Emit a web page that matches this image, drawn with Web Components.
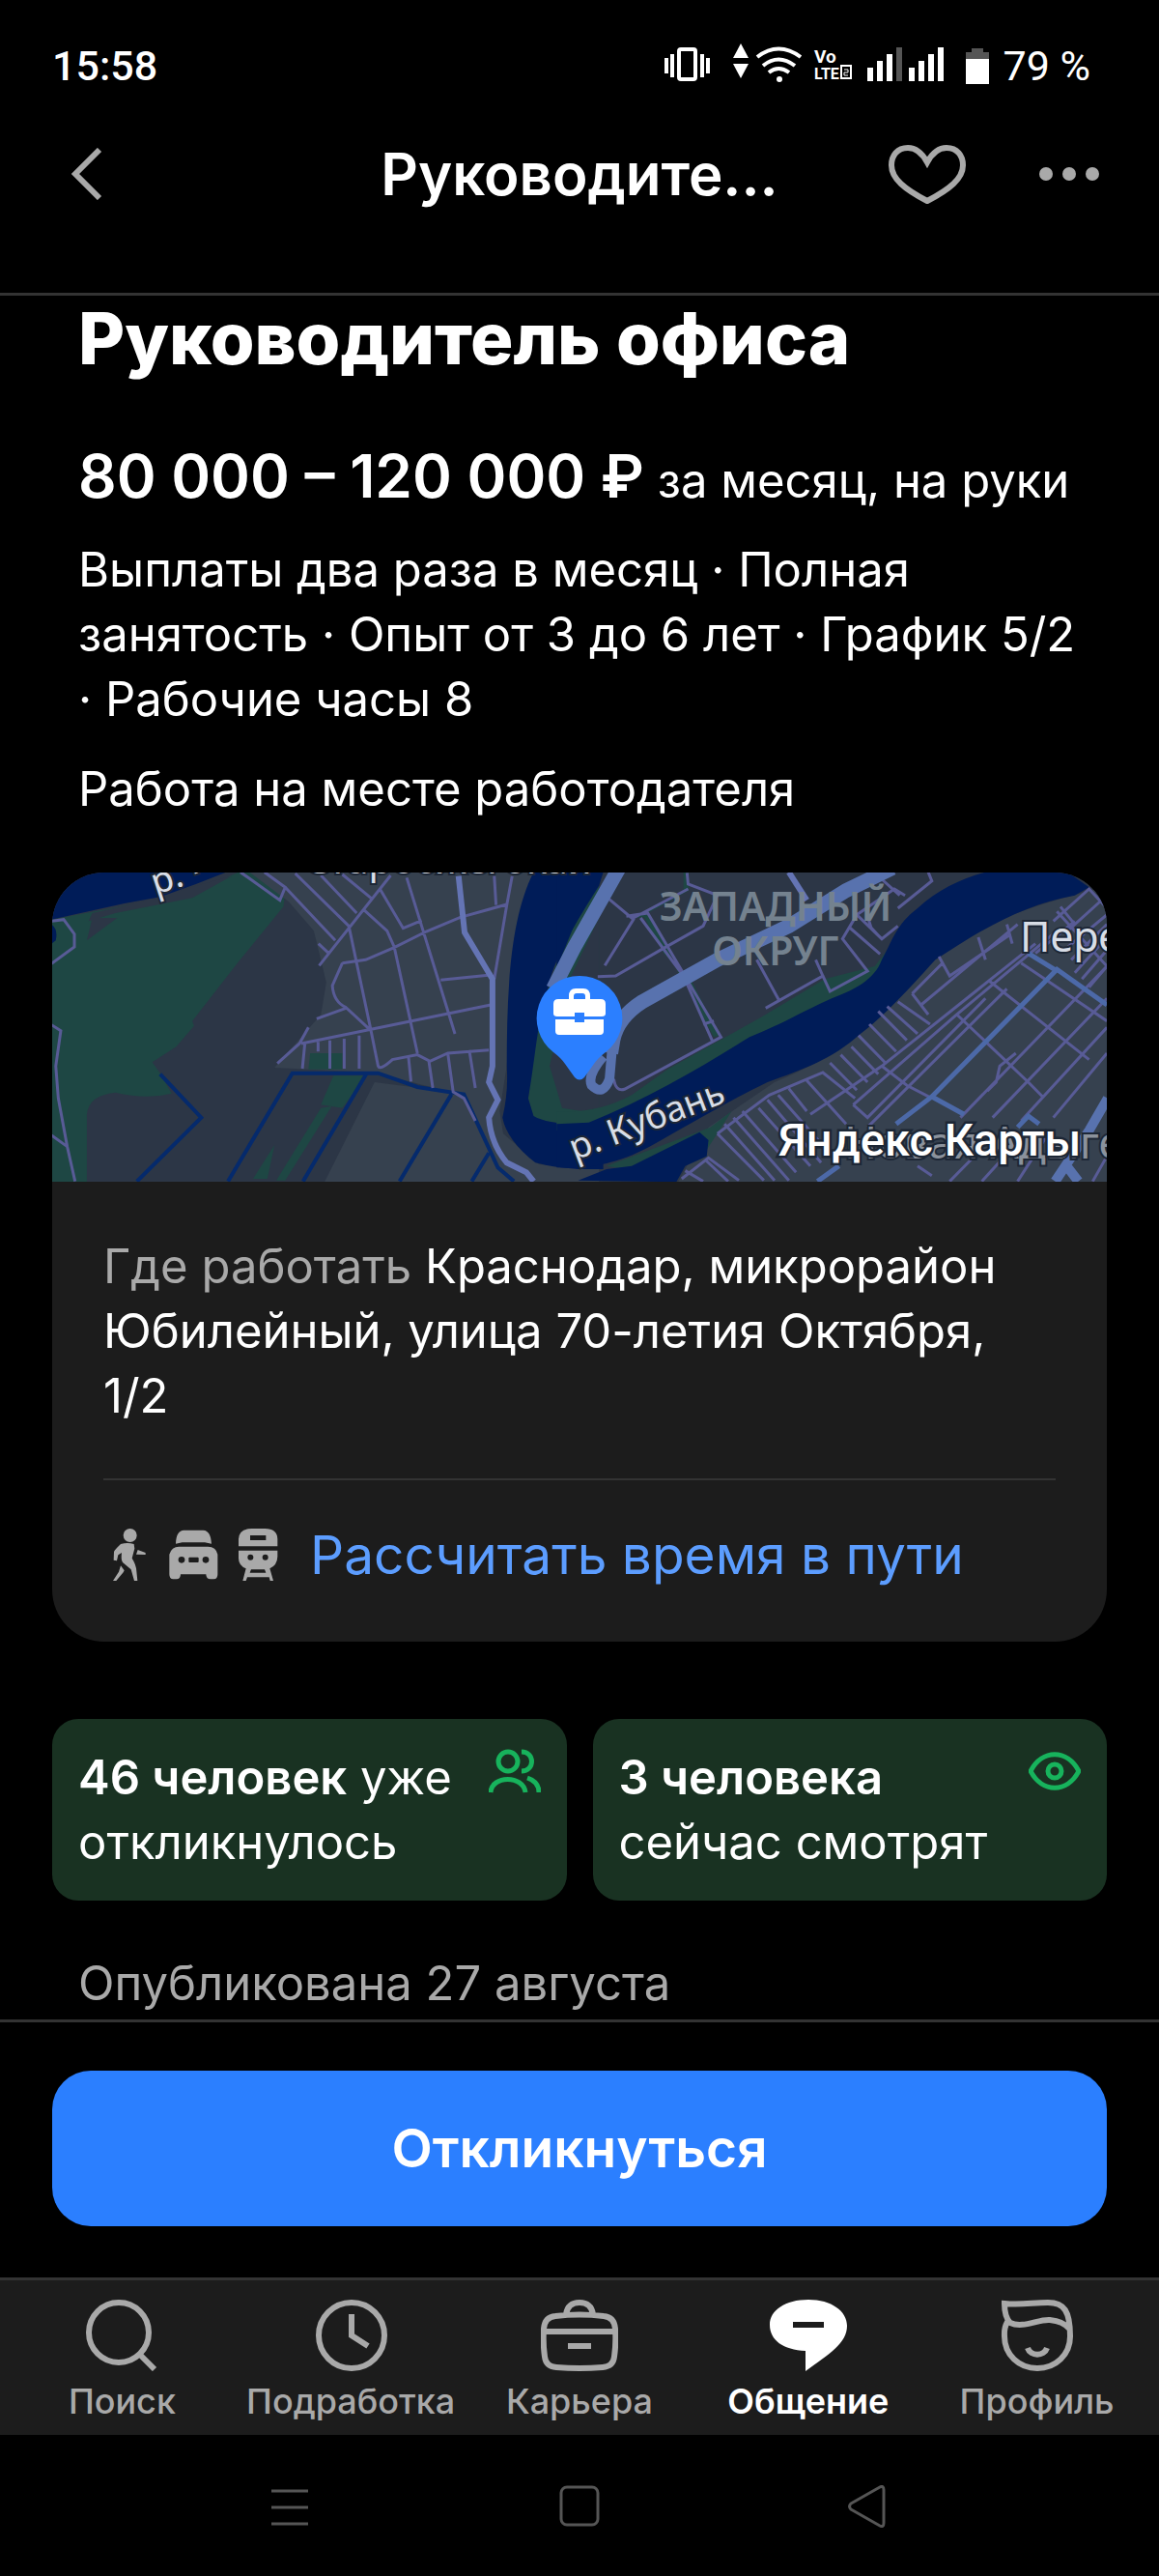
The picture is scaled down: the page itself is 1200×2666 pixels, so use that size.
<!DOCTYPE html>
<html lang="ru">
<head>
<meta charset="utf-8">
<meta name="viewport" content="width=device-width, initial-scale=1">
<title>Руководитель офиса</title>
<style>
  :root {
    --bg: #000;
    --surface: #1c1c1c;
    --line: #333;
    --muted: #a9a9a9;
    --blue: #2b7fff;
    --link: #5c9dff;
    --green: #17b35c;
    --edge: 54px;
    --text: 49px;
    --leading: 67px;
  }

  body {
    margin: 0;
    min-height: 100vh;
    display: flex;
    flex-direction: column;
    background: var(--bg);
    color: #fff;
    font-family: Inter, "Liberation Sans", sans-serif;
    font-size: var(--text);
    line-height: var(--leading);
  }

  main {
    flex: 1;
    padding: 2px var(--edge) 4px;
  }

  .stats {
    display: grid;
    grid-template-columns: 1fr 1fr;
    gap: 27px;
    margin-top: 80px;
  }

  .published {
    margin: 52px 27px 0;
    color: var(--muted);
  }
</style>
</head>
<body>
  <status-bar></status-bar>
  <top-bar>Руководите...</top-bar>

  <main>
    <vacancy-summary>
      <span slot="title">Руководитель офиса</span>
      <span slot="salary">80 000 – 120 000 ₽</span>
      <span slot="period">за месяц, на руки</span>
      <span slot="terms">Выплаты два раза в месяц · Полная занятость · Опыт от 3 до 6 лет · График 5/2 · Рабочие часы 8</span>
      <span slot="place">Работа на месте работодателя</span>
    </vacancy-summary>

    <location-card>
      <span slot="label">Где работать</span>
      Краснодар, микрорайон Юбилейный, улица 70-летия Октября, 1/2
      <span slot="route">Рассчитать время в пути</span>
    </location-card>

    <section class="stats">
      <stat-badge icon="people"><b slot="count">46 человек</b> уже откликнулось</stat-badge>
      <stat-badge icon="eye"><b slot="count">3 человека</b> сейчас смотрят</stat-badge>
    </section>

    <p class="published">Опубликована 27 августа</p>
  </main>

  <apply-bar>Откликнуться</apply-bar>

  <tab-bar>
    <tab-item icon="search">Поиск</tab-item>
    <tab-item icon="clock">Подработка</tab-item>
    <tab-item icon="case">Карьера</tab-item>
    <tab-item icon="chat" active>Общение</tab-item>
    <tab-item icon="profile">Профиль</tab-item>
  </tab-bar>

  <system-nav></system-nav>

<script>
customElements.define(
  "status-bar",
  class extends HTMLElement {
    constructor() {
      super().attachShadow({ mode: "open" });
    }

    connectedCallback() {
      this.shadowRoot.innerHTML = /*html*/ `
        <style>
          :host {
            display: flex;
            align-items: center;
            justify-content: space-between;
            height: 136px;
            padding: 0 71px 0 54px;
            font: 500 43px/50px Roboto, sans-serif;
          }

          .icons {
            display: flex;
            align-items: center;
            gap: 15px;
          }

          svg { display: block; }
          .level { font-weight: 400; }
        </style>

        <time>15:58</time>
        <div class="icons">
          <svg width="297" height="46" viewBox="0 0 297 46" fill="#fff">
            <!-- vibration -->
            <rect x="15" y="6" width="17" height="31" rx="2" fill="none" stroke="#fff" stroke-width="4"/>
            <path d="M0 15h4v16H0zM6 11h4v24H6zM37 11h4v24h-4zM43 15h4v16h-4z"/>
            <!-- traffic arrows -->
            <path d="M79 0l8 15H71zM79 36l8 -15H71z"/>
            <!-- wifi -->
            <g fill="none" stroke="#fff" stroke-width="4">
              <path d="M96 14Q118 -3 141 14M102 23Q118 10 135 23M108 30Q118 22 129 30"/>
            </g>
            <circle cx="119" cy="37" r="3"/>
            <!-- volte -->
            <text x="155" y="20" font-size="19" font-weight="700">Vo</text>
            <text x="155" y="37" font-size="16" font-weight="700">LTE</text>
            <rect x="183" y="23" width="10" height="13" fill="none" stroke="#fff" stroke-width="2"/>
            <path d="M186 27h4v3h-4v3h4" fill="none" stroke="#fff" stroke-width="1"/>
            <!-- signal -->
            <path d="M210 25h6v14h-6zM220 18h6v21h-6zM230 11h6v28h-6z"/>
            <path d="M240 4h6v35h-6z" fill="#555"/>
            <path d="M253 25h6v14h-6zM263 18h6v21h-6zM273 11h6v28h-6zM283 4h6v35h-6z"/>
          </svg>
          <svg width="24" height="37" viewBox="0 0 24 37">
            <path d="M0 11V4H6V0H18V4H24V11z" fill="#555"/>
            <path d="M0 11H24V37H0z" fill="#fff"/>
          </svg>
          <span class="level">79 %</span>
        </div>
      `;
    }
  }
);

customElements.define(
  "top-bar",
  class extends HTMLElement {
    constructor() {
      super().attachShadow({ mode: "open" });
    }

    connectedCallback() {
      this.shadowRoot.innerHTML = /*html*/ `
        <style>
          :host {
            display: grid;
            grid-template-columns: 1fr auto 1fr;
            align-items: center;
            height: 88px;
            padding: 0 62px 79px;
            border-bottom: 3px solid var(--line);
          }

          h2 {
            margin: 0;
            font-size: 60px;
            font-weight: 600;
            line-height: 72px;
          }

          button {
            display: block;
            padding: 0;
            border: 0;
            background: none;
            color: var(--muted);
          }

          .back { padding-left: 11px; }

          .actions {
            display: flex;
            align-items: center;
            justify-content: flex-end;
            gap: 75px;
          }

          svg {
            display: block;
            fill: none;
            stroke: currentColor;
            stroke-width: 6;
          }
        </style>

        <button class="back" aria-label="Назад">
          <svg width="34" height="54" viewBox="0 0 34 54"><path d="M30 2L5 27L30 52"/></svg>
        </button>
        <h2><slot></slot></h2>
        <div class="actions">
          <button aria-label="В избранное">
            <svg width="82" height="62" viewBox="0 0 82 62">
              <path d="M41 19C35 8 29 4 21 4C10 4 4 12 4 22C4 36 18 47 41 59C64 47 78 36 78 22C78 12 72 4 61 4C53 4 47 8 41 19z"/>
            </svg>
          </button>
          <button aria-label="Ещё">
            <svg width="62" height="14" viewBox="0 0 62 14">
              <g fill="currentColor" stroke="none"><circle cx="7" cy="7" r="7"/><circle cx="31" cy="7" r="7"/><circle cx="55" cy="7" r="7"/></g>
            </svg>
          </button>
        </div>
      `;
    }
  }
);

customElements.define(
  "vacancy-summary",
  class extends HTMLElement {
    constructor() {
      super().attachShadow({ mode: "open" });
    }

    connectedCallback() {
      this.shadowRoot.innerHTML = /*html*/ `
        <style>
          :host {
            display: block;
            padding: 0 27px;
          }

          h1 {
            margin: 0;
            font-size: 74px;
            font-weight: 800;
            line-height: 84px;
          }

          p { margin: 26px 0 0; }

          .salary {
            margin-top: 64px;
            font-size: 62px;
            line-height: 74px;
          }

          strong { font-weight: 600; }

          .salary small {
            font-size: var(--text);
            line-height: 50px;
          }
        </style>

        <h1><slot name="title"></slot></h1>
        <p class="salary"><strong><slot name="salary"></slot></strong><small> <slot name="period"></slot></small></p>
        <p><slot name="terms"></slot></p>
        <p><slot name="place"></slot></p>
      `;
    }
  }
);

customElements.define(
  "area-map",
  class extends HTMLElement {
    constructor() {
      super().attachShadow({ mode: "open" });
    }

    connectedCallback() {
      this.shadowRoot.innerHTML = /*html*/ `
        <style>
          :host {
            display: block;
            height: 320px;
            background: #2c3646;
          }

          svg {
            display: block;
            width: 100%;
            height: 100%;
            font-family: "Noto Sans", sans-serif;
          }

          path { vector-effect: non-scaling-stroke; }
          .water { fill: #001c58; }
          .canal { fill: none; stroke: #052a6c; stroke-width: 4; }
          .park { fill: #1e4744; }
          .town { fill: #36414f; }
          .street { fill: none; stroke: #585b96; stroke-width: 3; }
          .road { fill: none; stroke: #6474b4; stroke-width: 6; }
          .highway { fill: none; stroke: #5872ae; stroke-width: 15; }
          .label { fill: #d8dde6; stroke: #1d2736; stroke-width: 4; paint-order: stroke; }
          .district { fill: #74828f; font-weight: 600; text-anchor: middle; }
        </style>

        <svg viewBox="0 0 1092 320" preserveAspectRatio="xMidYMid slice">
          <!-- west bank -->
          <g transform="translate(-14 -13) scale(.37 .3333)">
            <path class="park" d="M36 185L300 130L430 100L560 38H640L692 80L685 145L560 315L430 500L435 515L385 580L318 628L340 662L372 725Q300 745 215 722Q140 730 135 790V1000H36z"/>
            <path fill="#2c3646" d="M140 190L215 165L430 118L540 50L440 80L250 140L150 165zM135 250L220 180L150 180z"/>
            <path class="water" d="M36 38H525L440 75L340 115L240 135L36 185zM36 200Q55 215 48 250L36 260z"/>
            <path class="town" d="M700 130L590 38H1400L1330 300L1310 640L1290 780L1300 850L1400 945L1568 960V1000H800L940 690L1150 720L940 660L660 645L790 480L805 380L770 220z"/>
            <path class="park" d="M760 600H850V650H755zM825 670H915L850 770L790 760zM790 770L820 765L690 995H665zM660 885L640 990H600z"/>
            <path class="canal" d="M340 665L455 800L275 998M530 998L710 662H950L1060 705L1190 728L1285 955L1330 998M918 662L740 998M1155 728L1010 998M1260 910L1212 998"/>
            <path class="street" d="M36 190L70 185L100 230V270L36 322M36 512L62 530L48 640L55 740L80 890L102 998M36 855L80 890"/>
            <path class="street" d="M565 38L675 125L690 85L632 38M690 85L830 250M718 42L868 205M790 48L890 165M850 45L930 118M985 48L785 328M783 260L812 290M868 205L930 530L950 640Q955 655 990 620L1060 605L1095 625L1145 600L1260 590M910 155L975 220L995 270L1060 600M955 90L1020 212L1072 188M1030 55L1165 540M850 320L915 310L995 272L1085 222L1180 178L1310 138M1325 50L1310 140L1275 370M1275 50L1280 140M1125 373L1265 357M850 320L822 390Q825 440 860 458L930 530M778 493L860 460M735 570L1265 450M755 520L730 570L668 632M745 570L738 648M782 565V595M815 560V648M855 555V648M897 545V648M1035 612L1042 688M1092 625L1103 708M1145 600L1160 720L1190 740L1222 810M1205 590L1222 708"/>
            <path class="road" d="M1175 50L1192 225L1270 370V640L1260 690L1285 745L1260 800Q1265 880 1310 940L1365 970L1385 998"/>
            <path class="park" d="M1568 60L1480 230Q1440 330 1395 520L1370 740L1385 800Q1450 830 1568 805V38z"/>
            <path fill="#2c3646" d="M1568 180L1490 360L1430 640L1465 770L1520 780L1568 770z"/>
            <path class="water" d="M1385 38H1580L1568 80C1500 200 1440 310 1425 400C1395 500 1392 600 1370 740L1385 795Q1440 830 1580 815V960H1510Q1440 955 1390 940Q1310 870 1298 800Q1315 720 1310 640C1310 400 1320 180 1385 38z"/>
          </g>

          <!-- east bank -->
          <g transform="translate(526 -13) scale(.37 .3333)">
            <path class="town" d="M1540 80C1350 130 1150 200 1040 310C900 480 800 600 600 690L415 830L330 1000H1540z"/>
            <path class="park" d="M-10 780Q100 790 200 730L300 650L430 570L560 490L740 370L880 330L1000 160L1110 70L1200 38H1260V60L1000 200L880 380L530 600L100 840H-10zM420 830L480 780L410 900L180 960L130 950z"/>
            <path class="park" d="M345 38V95L205 180L235 178L290 290L345 355L410 510L430 550L445 545L370 380L330 350L300 270L245 165L360 95V38z"/>
            <path class="water" d="M-10 38H120L40 200L0 310L-10 400zM-10 820L80 815C250 740 400 640 530 550C640 500 660 480 760 430C830 400 880 370 900 310C930 250 940 200 1000 150C1060 90 1120 60 1190 38H1420L1480 85L1440 110C1300 140 1200 200 1050 310C960 420 900 490 840 540C760 620 680 650 580 690C450 760 350 830 250 890C150 950 60 960 -10 955z"/>
            <path class="water" d="M50 995L130 960L200 950L390 845L415 870L410 920L350 950L325 1000z"/>
            <path class="street" d="M130 115L205 185L125 328M185 175L245 165L450 550L180 712Q155 720 150 680M225 180L345 360L425 560M355 40L358 75L440 110L400 205L280 280L155 360L105 362M205 180L358 90M400 510L430 500M550 310L612 435M575 460L735 360L715 310M735 360L755 408L860 345L790 245L830 170L900 245L945 205M810 210L895 292M830 170L935 90L965 110M945 150L1040 65L1030 38M900 60L950 110M860 175L870 210L895 240"/>
            <path class="street" d="M440 850L585 730L735 660L825 740M440 850L570 995M460 820L600 995M485 800L640 995M510 780L660 970M555 770L700 950M580 745L730 940M610 730L770 930M640 710L690 780M690 685L800 820M755 630L830 715M785 605L860 690M815 580L890 665M835 545L910 630M865 510L940 595M890 470L970 560M915 455L1000 540M945 440L1035 510M340 990L415 925L500 995M405 930L470 998M350 965L400 998"/>
            <path class="street" d="M985 415L1070 320L1090 360L1255 235M985 415L1030 480M1070 320L1060 300M1170 240L1190 310M1250 200L1265 260M1010 450L1280 200M700 790L900 640L1330 260M820 760L1110 480L1390 220M820 760L860 800L1190 430M900 640L970 700L1040 740M1110 480L1310 690L1350 735M1200 375L1480 620M1290 320L1530 500M860 830L1250 400M1120 800L1530 330M1210 800L1530 430M1290 810L1530 520M1380 800L1530 600M1330 290L1440 190M1275 600L1230 640L1220 690L1195 718M1000 950L1040 980M1090 998L1150 930M1180 998L1260 900M1280 998L1360 860M1490 998L1530 920"/>
            <path class="street" d="M1380 190L1480 90L1530 150M1400 145L1440 200M1420 220L1520 120M1390 160L1530 330M1410 280L1530 170M1430 310L1530 200M1440 350L1530 240M1460 370L1530 280M1480 395L1530 330"/>
            <path class="road" style="stroke: #4c69a8; stroke-width: 5" d="M940 820L1040 735L1390 340L1530 450M1310 290L1390 345M1040 735L1130 790M1280 830L1310 795L1340 820M720 998L780 950"/>
            <path class="road" d="M640 38L690 125"/>
            <path class="highway" d="M165 25L40 270L-20 400M930 25L800 95L640 205L440 310L230 440Q160 490 148 560L142 600"/>
            <path class="highway" style="stroke-width: 10" d="M145 590L138 680Q120 735 88 700Q75 670 120 610M1532 740L1480 840L1385 998M1410 940L1450 998"/>
          </g>

          <text class="label" x="261" y="1" font-size="40">Старобжегокай</text>
          <text class="label" transform="translate(107 23) rotate(-18)" font-size="37">р. <tspan dy="-8">К</tspan></text>
          <text class="district" x="749" y="50" font-size="41">ЗАПАДНЫЙ</text>
          <text class="district" x="749" y="96" font-size="41">ОКРУГ</text>
          <text class="label" x="1002" y="82" font-size="43">Пере</text>
          <text class="label" transform="translate(541 298) rotate(-21)" font-size="37">р. Кубань</text>
          <text class="label" x="820" y="296" font-size="46" style="fill: #8b929c">Новая Адыгея</text>
          <text x="752" y="293" font-size="47" font-weight="500" font-family="Roboto" fill="#fff" stroke="#1d2736" stroke-width="5" paint-order="stroke">Яндекс Карты</text>

          <!-- workplace pin -->
          <path fill="#2b7fff" d="M546 107a44 44 0 0 1 27 79q-8 6 -12 12l-10 14q-5 5 -10 0l-10 -14q-4 -6 -12 -12a44 44 0 0 1 27 -79z"/>
          <path fill="#fff" fill-rule="evenodd" d="M535 131v-3q0 -8 7 -8h8q7 0 7 8v3h11q5 0 5 5v10q0 3 -4 3h-18v-4h-10v4h-18q-4 0 -4 -3v-10q0 -5 5 -5zM540 131h12v-3q0 -3 -3 -3h-6q-3 0 -3 3zM521 152h20v3h10v-3h20v12q0 4 -4 4h-42q-4 0 -4 -4z"/>
        </svg>
      `;
    }
  }
);

customElements.define(
  "location-card",
  class extends HTMLElement {
    constructor() {
      super().attachShadow({ mode: "open" });
    }

    connectedCallback() {
      this.shadowRoot.innerHTML = /*html*/ `
        <style>
          :host {
            display: block;
            margin-top: 53px;
            overflow: hidden;
            border-radius: 54px;
            background: var(--surface);
          }

          .body { padding: 54px 53px 63px; }
          p { margin: 0 0 52px; }
          [name="label"] { color: var(--muted); }

          a {
            display: flex;
            align-items: center;
            gap: 13px;
            padding-top: 50px;
            border-top: 2px solid var(--line);
            color: var(--link);
            font-size: 55px;
            line-height: 54px;
            text-decoration: none;
          }

          a span { margin-left: 13px; }

          svg {
            flex: none;
            width: 54px;
            height: 54px;
            fill: var(--muted);
          }

          .hole { fill: var(--surface); }
        </style>

        <area-map></area-map>
        <div class="body">
          <p><slot name="label"></slot> <slot></slot></p>
          <a href="#route">
            <svg viewBox="50 98 162 162">
              <circle cx="133" cy="119" r="21"/>
              <path d="M104 146Q125 140 145 146L147 160L139 190Q152 210 153 230L156 260H146L136 225L110 203Q104 195 107 173L96 180L92 198L82 196L83 170Q86 163 104 146zM104 213L115 228L112 234L90 260H80L98 232zM157 164L181 173V179L152 178z"/>
            </svg>
            <svg viewBox="251 98 162 162">
              <path d="M275 145C276 115 285 104 300 103H360C378 104 384 120 386 145L365 141H295zM255 178Q262 154 285 154H375Q400 154 405 178V240Q405 255 393 255H383Q369 255 369 240H290Q290 255 277 255H267Q255 255 255 240z"/>
              <g class="hole"><circle cx="293" cy="195" r="10"/><circle cx="368" cy="195" r="10"/><rect x="315" y="187" width="31" height="16" rx="3"/></g>
            </svg>
            <svg viewBox="452 98 162 162">
              <path d="M470 153V130Q472 98 510 98H552Q590 98 591 130V153zM470 166H591V185Q590 212 567 222L578 260H568L565 249H497L493 260H483L493 222Q470 212 470 190z"/>
              <g class="hole"><rect x="506" y="119" width="49" height="15"/><circle cx="507" cy="187" r="9"/><circle cx="553" cy="187" r="9"/><path d="M509 225H551L555 235H505z"/></g>
            </svg>
            <span><slot name="route"></slot></span>
          </a>
        </div>
      `;
    }
  }
);

customElements.define(
  "stat-badge",
  class extends HTMLElement {
    static icons = {
      people: `<circle cx="20" cy="17" r="10"/><path d="M34 7c14 0 14 20 0 20M2 49C3 31 36 31 38 49M40 34Q52 38 52 49"/>`,
      eye: `<path d="M2 27C14 4 40 4 52 27C40 50 14 50 2 27z"/><circle cx="27" cy="27" r="7"/>`,
    };

    constructor() {
      super().attachShadow({ mode: "open" });
    }

    connectedCallback() {
      this.shadowRoot.innerHTML = /*html*/ `
        <style>
          :host {
            display: flex;
            justify-content: space-between;
            gap: 8px;
            padding: 27px;
            border-radius: 27px;
            background: #193222;
          }

          ::slotted(b) { font-weight: 600; }

          svg {
            flex: none;
            fill: none;
            stroke: var(--green);
            stroke-width: 5;
          }
        </style>

        <div><slot name="count"></slot> <slot></slot></div>
        <svg width="54" height="54" viewBox="0 0 54 54">${this.constructor.icons[this.getAttribute("icon")]}</svg>
      `;
    }
  }
);

customElements.define(
  "apply-bar",
  class extends HTMLElement {
    constructor() {
      super().attachShadow({ mode: "open" });
    }

    connectedCallback() {
      this.shadowRoot.innerHTML = /*html*/ `
        <style>
          :host {
            display: block;
            padding: 50px var(--edge) 53px;
            border-top: 3px solid var(--line);
          }

          button {
            display: block;
            width: 100%;
            padding: 47px;
            border: 0;
            border-radius: 40px;
            background: var(--blue);
            color: #fff;
            font: 600 55px/67px Inter, sans-serif;
          }
        </style>

        <button><slot></slot></button>
      `;
    }
  }
);

customElements.define(
  "tab-bar",
  class extends HTMLElement {
    constructor() {
      super().attachShadow({ mode: "open" });
    }

    connectedCallback() {
      this.shadowRoot.innerHTML = /*html*/ `
        <style>
          :host {
            display: block;
            padding: 20px 8px 13px;
            border-top: 3px solid var(--line);
            background: var(--surface);
          }

          nav {
            display: grid;
            grid-template-columns: repeat(5, minmax(0, 1fr));
          }
        </style>

        <nav><slot></slot></nav>
      `;
    }
  }
);

customElements.define(
  "tab-item",
  class extends HTMLElement {
    static icons = {
      search: `<circle cx="37" cy="34" r="31"/><path d="M58 56L74 72"/>`,
      clock: `<circle cx="41" cy="37" r="34"/><path d="M41 15V37L58 48"/>`,
      case: `<path d="M15 17Q40 14 65 17Q76 18 77 30Q78 45 76 59Q75 69 64 70Q40 72 16 70Q5 69 4 59Q2 45 3 30Q4 18 15 17zM4 33H76M28 48H52M26 15Q28 3 40 3Q52 3 54 15"/>`,
      chat: `<path d="M40 0C64 0 80 12 80 27C80 45 62 56 37 74V53C14 52 0 42 0 26C0 11 16 0 40 0z" fill="currentColor" stroke="none"/><path d="M24 26H56" stroke="#1c1c1c"/>`,
      profile: `<path d="M9 23C5 30 6 34 6 38C6 57 21 71 40 71C59 71 74 57 74 38C74 12 68 3 51 3C35 3 23 6 6 4C6 14 8 20 12 24C25 30 41 20 53 21C63 22 69 25 73 30M30 50C33 59 47 59 50 50"/>`,
    };

    constructor() {
      super().attachShadow({ mode: "open" });
    }

    connectedCallback() {
      this.shadowRoot.innerHTML = /*html*/ `
        <style>
          :host { display: block; }

          a {
            display: flex;
            flex-direction: column;
            align-items: center;
            gap: 9px;
            color: var(--muted);
            font-size: 36px;
            font-weight: 500;
            line-height: 44px;
            text-decoration: none;
          }

          :host([active]) a {
            color: #fff;
            font-weight: 600;
          }

          svg {
            fill: none;
            stroke: currentColor;
            stroke-width: 6;
          }
        </style>

        <a href="#${this.getAttribute("icon")}">
          <svg width="80" height="74" viewBox="0 0 80 74">${this.constructor.icons[this.getAttribute("icon")]}</svg>
          <slot></slot>
        </a>
      `;
    }
  }
);

customElements.define(
  "system-nav",
  class extends HTMLElement {
    constructor() {
      super().attachShadow({ mode: "open" });
    }

    connectedCallback() {
      this.shadowRoot.innerHTML = /*html*/ `
        <style>
          :host {
            display: flex;
            justify-content: space-around;
            height: 147px;
            padding: 0 12.5%;
          }

          button {
            flex: 1;
            display: grid;
            place-items: center;
            padding: 0;
            border: 0;
            background: none;
          }

          svg {
            fill: none;
            stroke: #555;
            stroke-width: 3;
            stroke-linejoin: round;
          }
        </style>

        <button aria-label="Недавние"><svg width="44" height="44" viewBox="0 0 44 44"><path d="M3 6H41M3 23H41M3 40H41"/></svg></button>
        <button aria-label="Домой"><svg width="44" height="44" viewBox="0 0 44 44"><rect x="3" y="2" width="38" height="39" rx="6"/></svg></button>
        <button aria-label="Назад"><svg width="44" height="44" viewBox="0 0 44 44"><path d="M33 2Q37 0 37 5V39Q37 44 33 42L3 25Q0 22 3 19z"/></svg></button>
      `;
    }
  }
);
</script>
</body>
</html>
